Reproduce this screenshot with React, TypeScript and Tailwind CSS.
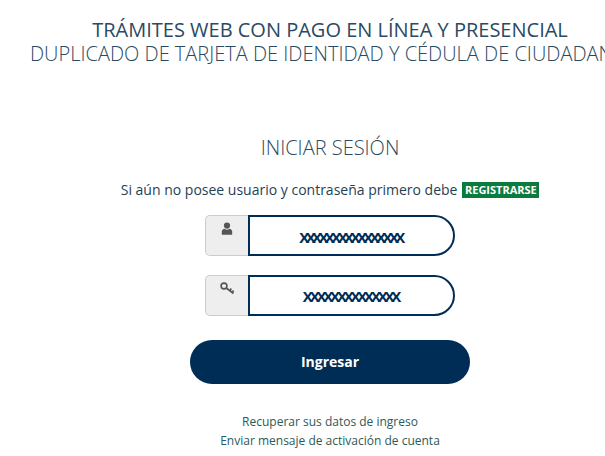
const font = { fontFamily: '"Open Sans", sans-serif' };

function Field({ icon, value, tracking, pad }: { icon: React.ReactNode; value: string; tracking: string; pad: string }) {
  return (
    <div className="flex h-[41px] w-[250px]">
      <div className="flex w-[43px] justify-center rounded-l-[5px] border border-r-0 border-[#cccccc] bg-[#eeeeee] pt-[6px] text-[#555555]">
        {icon}
      </div>
      <div className={`flex flex-1 items-center justify-center rounded-r-[21px] border-2 border-[#002d56] bg-white ${pad}`}>
        <span className={`text-[15px] font-bold leading-none text-[#002d56] ${tracking}`}>{value}</span>
      </div>
    </div>
  );
}

export default function App() {
  return (
    <div className="h-[456px] w-[605px] overflow-hidden bg-white" style={font}>
      <div className="flex w-[660px] flex-col items-center">
        <h1 className="mt-[18px] whitespace-nowrap text-[20px] font-normal leading-[24px] text-[#2a4a62]">
          TRÁMITES WEB CON PAGO EN LÍNEA Y PRESENCIAL
        </h1>
        <h2 className="whitespace-nowrap text-[20px] font-light leading-[24px] text-[#2a4a62]">
          DUPLICADO DE TARJETA DE IDENTIDAD Y CÉDULA DE CIUDADANÍA
        </h2>
        <h3 className="mt-[68px] text-[20px] font-light leading-[28px] text-[#2a4a62]">INICIAR SESIÓN</h3>
        <p className="mt-[18px] flex items-center text-[14px] leading-[20px] text-[#1f3f55]">
          <span>Si aún no posee usuario y contraseña primero debe</span>
          <span className="ml-[5px] bg-[#0b7a3e] px-[2.5px] text-[11px] font-bold leading-[16px] text-white">REGISTRARSE</span>
        </p>
        <div className="mt-[15px] flex flex-col gap-[19px]">
          <Field
            value="XXXXXXXXXXXXXXXX"
            tracking="tracking-[-3.6px]"
            pad="pt-[4px] pr-[2px]"
            icon={
              <svg width="12" height="14" viewBox="0 0 12 14" fill="currentColor">
                <circle cx="6" cy="3.6" r="3.1" />
                <path d="M0.8 12.2V9.6C0.8 8 2.2 7 3.6 6.8 4.3 7.4 5.1 7.7 6 7.7 6.9 7.7 7.7 7.4 8.4 6.8 9.8 7 11.2 8 11.2 9.6V12.2C11.2 12.6 10.9 12.8 10.5 12.8H1.5C1.1 12.8 0.8 12.6 0.8 12.2Z" />
              </svg>
            }
          />
          <Field
            value="XXXXXXXXXXXXXX"
            tracking="tracking-[-3.2px]"
            pad="pt-[1px] pr-[2px]"
            icon={
              <svg width="15" height="14" viewBox="0 0 15 14" fill="none" stroke="currentColor" strokeWidth="1.6">
                <circle cx="4" cy="4" r="2.9" />
                <path d="M6.2 6 13.5 11.5M9.6 8.6 11.4 6.6M12 10.4 13.6 8.6" />
              </svg>
            }
          />
        </div>
        <button className="mt-[24px] h-[44px] w-[280px] rounded-[22px] bg-[#002d56] pb-[2px] text-[14px] font-bold text-white">
          Ingresar
        </button>
        <div className="mt-[28px] flex flex-col items-center text-[12px] leading-[19px] text-[#2a5a5a]">
          <span>Recuperar sus datos de ingreso</span>
          <span>Enviar mensaje de activación de cuenta</span>
        </div>
      </div>
    </div>
  );
}
